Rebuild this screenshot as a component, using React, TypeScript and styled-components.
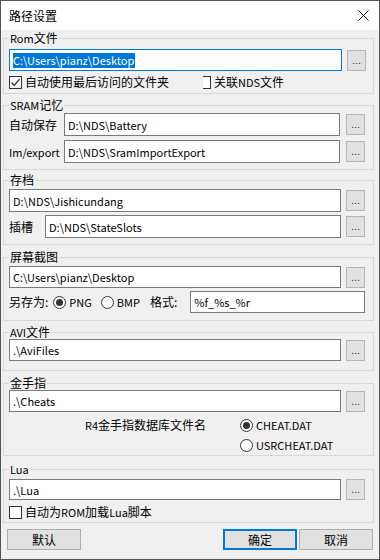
import React from "react";
import styled, { createGlobalStyle, css } from "styled-components";

const Global = createGlobalStyle`
  html, body { margin: 0; padding: 0; background: #fff; }
  body {
    font-family: "Noto Sans CJK SC", "Noto Sans", sans-serif;
    font-size: 12px;
    color: #000;
  }
  * { box-sizing: border-box; }
`;

const Window = styled.div`
  width: 380px;
  height: 560px;
  border: 1px solid #555;
  background: #f0f0f0;
  display: flex;
  flex-direction: column;
`;

const TitleBar = styled.div`
  height: 29px;
  background: #fff;
  display: flex;
  align-items: center;
  justify-content: space-between;
  padding-left: 8px;
  flex: none;
`;

const Title = styled.span`
  font-size: 12px;
  line-height: 14px;
`;

const CloseBox = styled.div`
  width: 32px;
  height: 29px;
  display: flex;
  align-items: center;
  justify-content: center;
`;

const Body = styled.div`
  padding: 1px 5px 0 2px;
  display: flex;
  flex-direction: column;
`;

const Group = styled.fieldset<{ $mt: number; $pb: number }>`
  margin: ${(p) => p.$mt}px 0 0 0;
  padding: 0 7px ${(p) => p.$pb}px 5px;
  border: 1px solid #d8d8d8;
  min-width: 0;
`;

const Legend = styled.legend`
  padding: 0 1px;
  font-size: 12px;
  line-height: 14px;
`;

/* Latin runs are set a size smaller, as the dialog font's Latin is narrower */
const Lat = styled.span`
  font-size: 11px;
`;

const Row = styled.div<{ $mt?: number }>`
  display: flex;
  align-items: center;
  margin-top: ${(p) => p.$mt ?? 0}px;
`;

const Label = styled.span<{ $w: number }>`
  width: ${(p) => p.$w}px;
  flex: none;
  line-height: 14px;
  white-space: nowrap;
`;

const TextBox = styled.div<{ $h: number; $focused?: boolean; $ml?: number; $mr?: number }>`
  flex: 1;
  min-width: 0;
  height: ${(p) => p.$h}px;
  margin-left: ${(p) => p.$ml ?? 0}px;
  margin-right: ${(p) => p.$mr ?? 0}px;
  background: #fff;
  border: 1px solid ${(p) => (p.$focused ? "#0078d7" : "#7a7a7a")};
  display: flex;
  align-items: center;
  padding-left: 3px;
  font-size: 11px;
  line-height: 14px;
  white-space: nowrap;
  overflow: hidden;
`;

const Selected = styled.span`
  background: #0078d7;
  color: #fff;
  line-height: 15px;
  padding: 0 1px 0 0;
`;

const Browse = styled.div<{ $mr?: number }>`
  width: 19px;
  height: 21px;
  flex: none;
  margin-right: ${(p) => p.$mr ?? 0}px;
  background: #e1e1e1;
  border: 1px solid #b5b5b5;
  display: flex;
  align-items: flex-end;
  justify-content: center;
  padding-bottom: 4px;
  font-family: "Liberation Sans", sans-serif;
  font-size: 11px;
  line-height: 11px;
  color: #333;
`;

const CheckRow = styled.div<{ $mt: number }>`
  display: flex;
  align-items: center;
  margin-top: ${(p) => p.$mt}px;
  height: 14px;
  line-height: 14px;
`;

const CheckBox = styled.span<{ $clipped?: boolean; $ml?: number }>`
  width: ${(p) => (p.$clipped ? 8 : 13)}px;
  height: 13px;
  flex: none;
  background: #fff;
  border: 1px solid #333;
  margin-left: ${(p) => p.$ml ?? 0}px;
  margin-right: 3px;
  display: flex;
  align-items: center;
  justify-content: center;
  ${(p) =>
    p.$clipped &&
    css`
      border-left: none;
    `}
`;

const Radio = styled.span<{ $checked?: boolean; $ml?: number }>`
  width: 13px;
  height: 13px;
  flex: none;
  border-radius: 50%;
  background: #fff;
  border: 1px solid #333;
  margin-left: ${(p) => p.$ml ?? 0}px;
  margin-right: 3px;
  display: flex;
  align-items: center;
  justify-content: center;
  &::after {
    content: "";
    width: 7px;
    height: 7px;
    border-radius: 50%;
    background: ${(p) => (p.$checked ? "#333" : "transparent")};
  }
`;

const Inline = styled.span<{ $ml?: number }>`
  margin-left: ${(p) => p.$ml ?? 0}px;
  line-height: 14px;
  white-space: nowrap;
`;

const CheatGrid = styled.div`
  display: grid;
  grid-template-columns: 231px 1fr;
  row-gap: 6px;
  margin-top: 6px;
  line-height: 14px;
`;

const CheatText = styled.span`
  padding-left: 76px;
  white-space: nowrap;
`;

const RadioItem = styled.div`
  display: flex;
  align-items: center;
  height: 14px;
`;

const Footer = styled.div`
  display: flex;
  justify-content: space-between;
  margin-top: 6px;
  padding: 0 1px 0 4px;
`;

const ButtonGroup = styled.div`
  display: flex;
  gap: 2px;
`;

const PushButton = styled.div<{ $default?: boolean }>`
  width: 74px;
  height: 21px;
  background: #e1e1e1;
  border: ${(p) => (p.$default ? "2px solid #0078d7" : "1px solid #adadad")};
  display: flex;
  align-items: center;
  justify-content: center;
  line-height: 14px;
`;

const CheckMark = () => (
  <svg width="11" height="11" viewBox="0 0 11 11">
    <path d="M1.5 5.5 L4.2 8.3 L9.6 2.2" fill="none" stroke="#222" strokeWidth="1.2" />
  </svg>
);

const CloseIcon = () => (
  <svg width="11" height="11" viewBox="0 0 11 11">
    <path d="M0.5 0.5 L10.5 10.5 M10.5 0.5 L0.5 10.5" stroke="#111" strokeWidth="1" />
  </svg>
);

export default function App() {
  return (
    <>
      <Global />
      <Window>
        <TitleBar>
          <Title>路径设置</Title>
          <CloseBox>
            <CloseIcon />
          </CloseBox>
        </TitleBar>
        <Body>
          <Group $mt={0} $pb={4}>
            <Legend>
              <Lat>Rom</Lat>文件
            </Legend>
            <Row $mt={4}>
              <TextBox $h={22} $focused $mr={5}>
                <Selected>C:\Users\pianz\Desktop</Selected>
              </TextBox>
              <Browse>...</Browse>
            </Row>
            <CheckRow $mt={4}>
              <CheckBox>
                <CheckMark />
              </CheckBox>
              <Inline>自动使用最后访问的文件夹</Inline>
              <CheckBox $clipped $ml={34} />
              <Inline>
                关联<Lat>NDS</Lat>文件
              </Inline>
            </CheckRow>
          </Group>

          <Group $mt={4} $pb={6}>
            <Legend>
              <Lat>SRAM</Lat>记忆
            </Legend>
            <Row $mt={1}>
              <Label $w={55}>自动保存</Label>
              <TextBox $h={23} $mr={6}>D:\NDS\Battery</TextBox>
              <Browse $mr={1}>...</Browse>
            </Row>
            <Row $mt={4}>
              <Label $w={55}>
                <Lat>Im/export</Lat>
              </Label>
              <TextBox $h={23} $mr={6}>D:\NDS\SramImportExport</TextBox>
              <Browse $mr={1}>...</Browse>
            </Row>
          </Group>

          <Group $mt={3} $pb={6}>
            <Legend>存档</Legend>
            <Row $mt={2}>
              <TextBox $h={23} $mr={5}>D:\NDS\Jishicundang</TextBox>
              <Browse $mr={1}>...</Browse>
            </Row>
            <Row $mt={3}>
              <Label $w={36}>插槽</Label>
              <TextBox $h={23} $mr={5}>D:\NDS\StateSlots</TextBox>
              <Browse $mr={1}>...</Browse>
            </Row>
          </Group>

          <Group $mt={5} $pb={7}>
            <Legend>屏幕截图</Legend>
            <Row $mt={2}>
              <TextBox $h={22} $mr={5}>C:\Users\pianz\Desktop</TextBox>
              <Browse $mr={1}>...</Browse>
            </Row>
            <Row $mt={3}>
              <Inline>另存为:</Inline>
              <Radio $checked $ml={5} />
              <Inline>
                <Lat>PNG</Lat>
              </Inline>
              <Radio $ml={9} />
              <Inline>
                <Lat>BMP</Lat>
              </Inline>
              <Inline $ml={10}>格式:</Inline>
              <TextBox $h={22} $ml={13} $mr={1}>
                %f_%s_%r
              </TextBox>
            </Row>
          </Group>

          <Group $mt={4} $pb={9}>
            <Legend>
              <Lat>AVI</Lat>文件
            </Legend>
            <Row $mt={0}>
              <TextBox $h={22} $mr={5}>.\AviFiles</TextBox>
              <Browse $mr={1}>...</Browse>
            </Row>
          </Group>

          <Group $mt={5} $pb={3}>
            <Legend>金手指</Legend>
            <Row $mt={0}>
              <TextBox $h={22} $mr={5}>.\Cheats</TextBox>
              <Browse $mr={1}>...</Browse>
            </Row>
            <CheatGrid>
              <CheatText>
                <Lat>R4</Lat>金手指数据库文件名
              </CheatText>
              <RadioItem>
                <Radio $checked />
                <Inline>
                  <Lat>CHEAT.DAT</Lat>
                </Inline>
              </RadioItem>
              <span />
              <RadioItem>
                <Radio />
                <Inline>
                  <Lat>USRCHEAT.DAT</Lat>
                </Inline>
              </RadioItem>
            </CheatGrid>
          </Group>

          <Group $mt={6} $pb={3}>
            <Legend>
              <Lat>Lua</Lat>
            </Legend>
            <Row $mt={3}>
              <TextBox $h={21} $mr={5}>.\Lua</TextBox>
              <Browse $mr={1}>...</Browse>
            </Row>
            <CheckRow $mt={5}>
              <CheckBox />
              <Inline>
                自动为<Lat>ROM</Lat>加载<Lat>Lua</Lat>脚本
              </Inline>
            </CheckRow>
          </Group>

          <Footer>
            <PushButton>默认</PushButton>
            <ButtonGroup>
              <PushButton $default>确定</PushButton>
              <PushButton>取消</PushButton>
            </ButtonGroup>
          </Footer>
        </Body>
      </Window>
    </>
  );
}
